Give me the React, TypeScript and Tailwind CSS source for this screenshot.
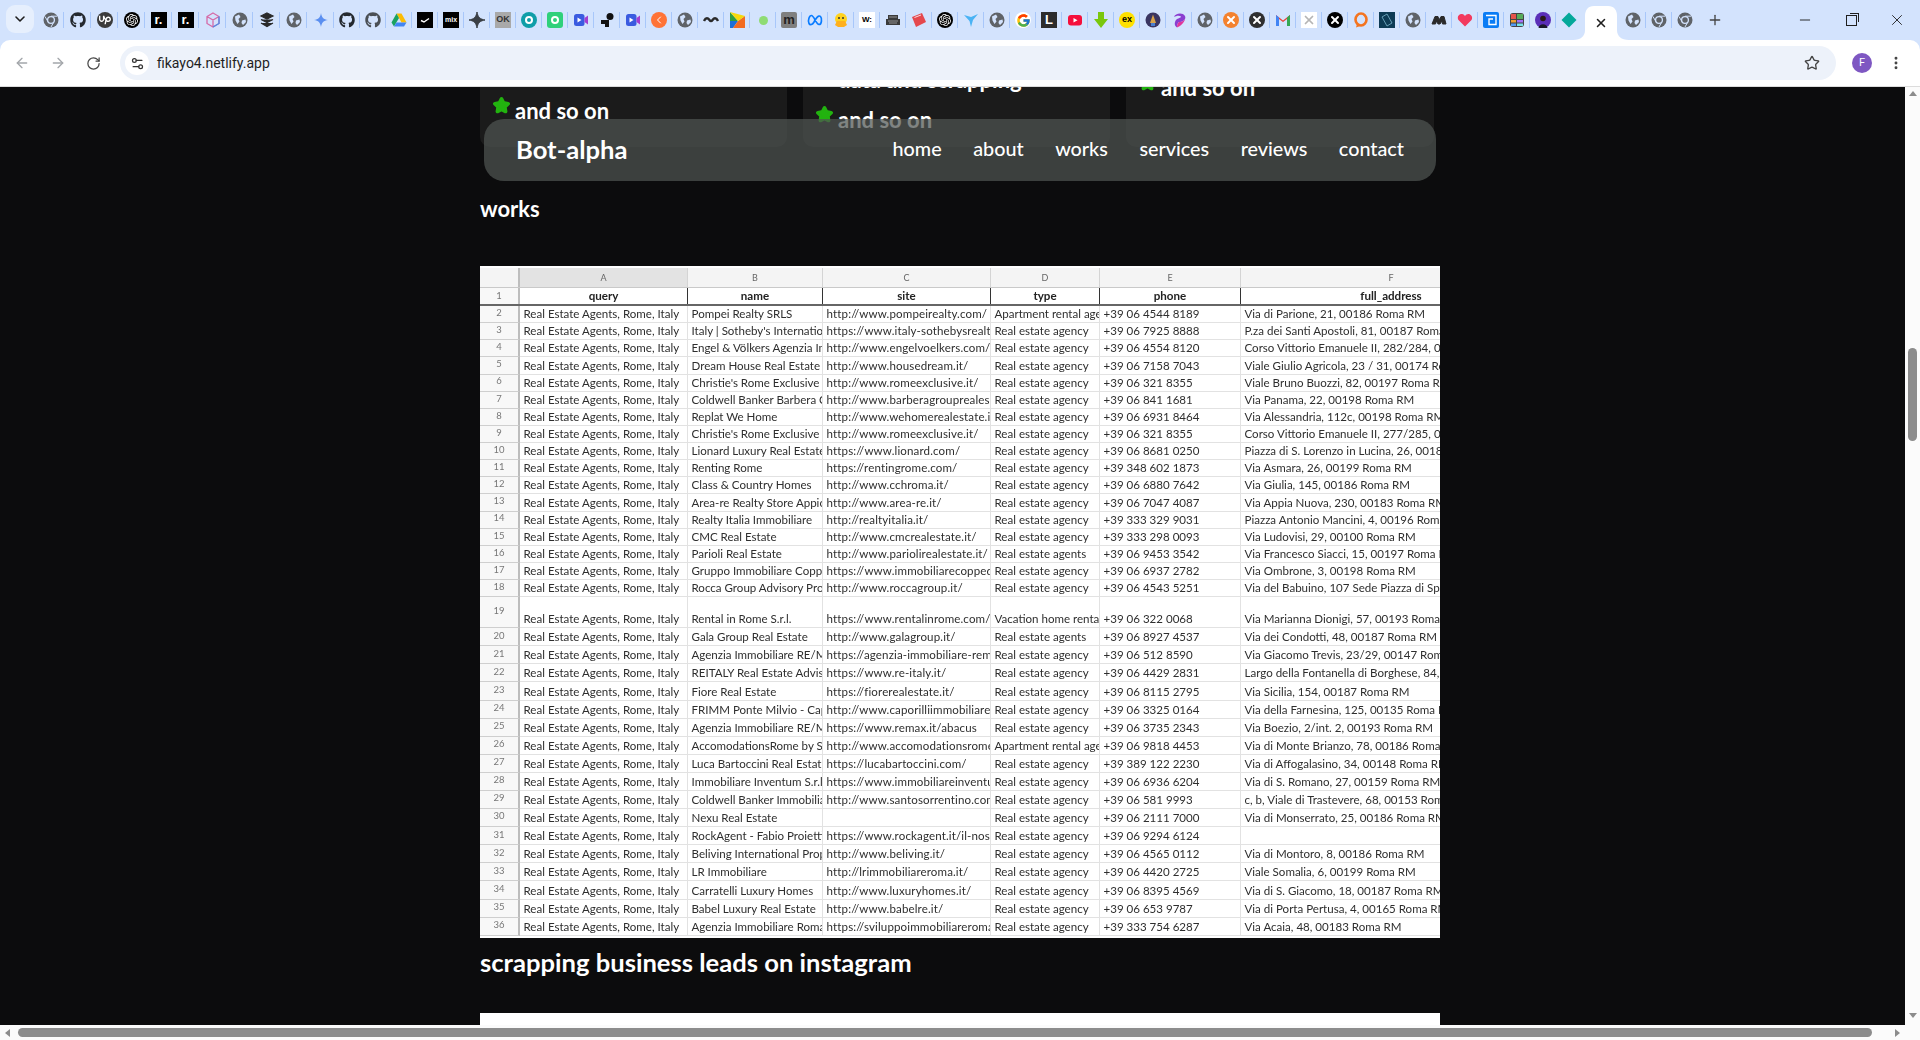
import { ReactNode } from "react";
import { ArrowLeft, ArrowRight, ChevronDown, EllipsisVertical, Minus, Plus, RotateCw, Settings2, Star, X } from "lucide-react";
import { FaGithub } from "react-icons/fa";
import { FcGoogle } from "react-icons/fc";
import { SiOpenai, SiUpwork } from "react-icons/si";

const Box = ({ className, children }: { className: string; children?: ReactNode }) => (
  <div className={`flex h-4 w-4 items-center justify-center overflow-hidden ${className}`}>{children}</div>
);

const Svg = ({ children }: { children: ReactNode }) => (
  <svg viewBox="0 0 16 16" className="h-4 w-4">
    {children}
  </svg>
);

const globe = (
  <Svg>
    <circle cx="8" cy="8" r="7.5" fill="#5f6368" />
    <path d="M3 4.5 7 2.5 8.5 5 6.5 7 7.5 9.5 5.5 12 3.5 8.5Z M10 8.5 13.5 7.5 14 10 11 13 9.5 11Z" fill="#d3e3fd" />
  </Svg>
);
const chrome = (
  <Svg>
    <circle cx="8" cy="8" r="7.5" fill="#5f6368" />
    <circle cx="8" cy="8" r="3.4" fill="#5f6368" stroke="#d3e3fd" strokeWidth="1.3" />
    <path d="M8 4.2H14M5 9.8 2 4.5M10.8 10 8 15" stroke="#d3e3fd" strokeWidth="1" />
  </Svg>
);
const video = (
  <Svg>
    <rect x="1" y="2" width="10.5" height="12" rx="2.5" fill="#3a5be0" />
    <path d="M11.5 6 15 3.5V12.5L11.5 10Z" fill="#a33fd0" />
    <path d="M4.5 5.5 8.5 8 4.5 10.5Z" fill="#fff" />
  </Svg>
);
const rSquare = (
  <Box className="bg-black font-['Liberation_Sans',sans-serif] text-[13px] font-bold text-white">r.</Box>
);
const github = <FaGithub className="h-4 w-4 text-[#24292f]" />;
const openaiDisc = (
  <Box className="rounded-full bg-black text-white">
    <SiOpenai className="h-3 w-3" />
  </Box>
);

const favicons: ReactNode[] = [
  chrome,
  github,
  <Box className="rounded-full bg-[#3b3b3b] text-white"><SiUpwork className="h-3 w-3" /></Box>,
  openaiDisc,
  rSquare,
  rSquare,
  <Svg><path d="M8 1 14 4.5V11.5L8 15 2 11.5V4.5Z M2 4.5 8 8 14 4.5 M8 8V15" fill="none" stroke="#d56aa8" strokeWidth="1.3" /><path d="M14 4.5V11.5L8 15" fill="none" stroke="#4b8fe8" strokeWidth="1.3" /></Svg>,
  globe,
  <Svg><path d="M8 1 14 4 8 7 2 4Z M2 7.5 8 10.5 14 7.5 M2 11 8 14.5 14 11" fill="#2a2a2a" stroke="#2a2a2a" strokeWidth="1.2" /></Svg>,
  globe,
  <Svg><path d="M8 1C8.6 5.4 10.6 7.4 15 8 10.6 8.6 8.6 10.6 8 15 7.4 10.6 5.4 8.6 1 8 5.4 7.4 7.4 5.4 8 1Z" fill="#5b8ff0" /></Svg>,
  github,
  <FaGithub className="h-4 w-4 text-[#4a4f55]" />,
  <Svg><path d="M5.5 1.5H10.5L15.5 10.5H10.5Z" fill="#fbbc04" /><path d="M5.5 1.5 8 6 3 14.5.5 10.5Z" fill="#1aa260" /><path d="M5.5 10.5H15.5L13 14.5H3Z" fill="#4285f4" /></Svg>,
  <Box className="bg-black"><svg viewBox="0 0 16 16" className="h-4 w-4"><path d="M4 8.5 7 10 12 6.5" fill="none" stroke="#fff" strokeWidth="1.4" /></svg></Box>,
  <Box className="bg-black font-['Liberation_Sans',sans-serif] text-[7px] font-bold text-white">mix</Box>,
  <Svg><path d="M8 0C8.8 5 11 7.2 16 8 11 8.8 8.8 11 8 16 7.2 11 5 8.8 0 8 5 7.2 7.2 5 8 0Z" fill="#3a3f45" stroke="#3a3f45" /></Svg>,
  <Box className="bg-[#a9a9a9] font-['Liberation_Sans',sans-serif] text-[9px] font-bold text-[#333]">OK</Box>,
  <Box className="rounded-full bg-[#0f9ea8]"><span className="h-2 w-2 rounded-full border-2 border-white" /></Box>,
  <Box className="rounded-[3px] bg-[#2fd07a]"><span className="h-2 w-2 rounded-sm border-2 border-white" /></Box>,
  video,
  <Svg><circle cx="11" cy="4.5" r="3.5" fill="#111" /><path d="M2 8H10V15H6V12H2Z" fill="#111" /></Svg>,
  video,
  <Box className="rounded-full bg-[#ff7336]"><ChevronDown className="h-3 w-3 rotate-90 text-white" /></Box>,
  globe,
  <Svg><path d="M1 9C3 5 5 6 6.5 8 7.5 9.5 8.5 9.5 9.5 8 11 6 13 5 15 9" fill="none" stroke="#2a2a2a" strokeWidth="2.4" /></Svg>,
  <Svg><path d="M1 0 9 9H1Z" fill="#2e9e3f" /><path d="M1 9H9L4 16H1Z" fill="#1d6fd8" /><path d="M9 9 16 4V16H4Z" fill="#f26b21" /><path d="M1 0 16 4 9 9Z" fill="#f5d90a" /></Svg>,
  <Box className="bg-transparent"><span className="h-[9px] w-[9px] rounded-full bg-[#8fdc74]" /></Box>,
  <Box className="rounded-[2px] bg-[#7f7f7f] font-['Liberation_Sans',sans-serif] text-[13px] font-bold text-[#222]">m</Box>,
  <Svg><path d="M2 11.5C.5 8 2.5 3.5 4.5 3.5 7 3.5 9 12.5 12 12.5 15 12.5 15 6 13.5 4.5 11.5 2.5 8.5 7 7 10 5.5 12.8 3 13.5 2 11.5Z" fill="none" stroke="#0a7cff" strokeWidth="1.7" /></Svg>,
  <Svg><circle cx="8" cy="7" r="6" fill="#ffd21e" /><path d="M2 13 4 9H12L14 13 11 15H5Z" fill="#ffb01e" /><circle cx="6" cy="6" r="1" fill="#333" /><circle cx="10" cy="6" r="1" fill="#333" /></Svg>,
  <Box className="bg-white font-['Liberation_Sans',sans-serif] text-[8px] font-bold text-black">W:</Box>,
  <Svg><path d="M3 3H13V7H15V13H1V7H3Z" fill="#3a3a3a" /><path d="M4 5H12M3 9H13M4 11H12" stroke="#aaa" strokeWidth=".8" /></Svg>,
  <Svg><path d="M1 5 11 1 15 10 5 15Z" fill="#e5484d" /><path d="M3.5 5.5 10 3" stroke="#fff" strokeWidth=".8" /></Svg>,
  openaiDisc,
  <Svg><path d="M1 3 8 5 15 2 10 8 8 15 6.5 9Z" fill="#4ab3f4" /></Svg>,
  globe,
  <Box className="rounded-full bg-white"><FcGoogle className="h-[15px] w-[15px]" /></Box>,
  <Box className="bg-[#2c2c2c] font-['Liberation_Sans',sans-serif] text-[13px] font-bold text-white">L</Box>,
  <Svg><rect x="1" y="3" width="14" height="10.5" rx="3" fill="#f50f3c" /><path d="M6.5 6 10.5 8.2 6.5 10.5Z" fill="#fff" /></Svg>,
  <Svg><path d="M5 0H11V7H15L8 16 1 7H5Z" fill="#7ac70c" /></Svg>,
  <Box className="rounded-full bg-[#ffe000] font-['Liberation_Sans',sans-serif] text-[9px] font-bold text-black">ex</Box>,
  <Svg><circle cx="8" cy="8" r="7.5" fill="#3a3560" /><path d="M8 2.5 11 11H5Z" fill="#d8a34a" /><path d="M6 11H10V14H6Z" fill="#4a7fd0" /></Svg>,
  <Svg><path d="M3 5C4 1 12 0 14 4 15.5 8 11 10 8 10 6.5 11 6 13 6 15.5 3.5 14 3 11 5 8 7 6 10 6 10 4.5 8 3 5 4 3 5Z" fill="#8a3ed0" /><path d="M8 10C11 10 15.5 8 14 4 15 8 12 13 6 15.5 6 13 6.5 11 8 10Z" fill="#e0359a" /></Svg>,
  globe,
  <Box className="rounded-full bg-[#f4822f]"><X className="h-3 w-3 text-white" strokeWidth={4} /></Box>,
  <Box className="rounded-full bg-[#2f2f2f]"><X className="h-3 w-3 text-white" strokeWidth={4} /></Box>,
  <Svg><path d="M1 14V3L8 8.5 15 3V14H12V7L8 10 4 7V14Z" fill="#ea4335" /><path d="M1 14V3L4 5.5V14Z" fill="#4285f4" /><path d="M15 14V3L12 5.5V14Z" fill="#34a853" /></Svg>,
  <Box className="bg-white"><X className="h-3.5 w-3.5 text-[#b5b5b5]" strokeWidth={3} /></Box>,
  <Box className="rounded-full bg-black"><X className="h-3 w-3 text-white" strokeWidth={4} /></Box>,
  <Svg><ellipse cx="8" cy="7.5" rx="5.5" ry="6" fill="none" stroke="#f4741f" strokeWidth="2.6" /><path d="M4 12 3 15.5 7 14Z" fill="#f4741f" /></Svg>,
  <Box className="bg-[#0d3b55]"><svg viewBox="0 0 16 16" className="h-4 w-4"><path d="M3 5 8 2 13 11 8 14Z" fill="none" stroke="#6fa8c0" strokeWidth=".9" /></svg></Box>,
  globe,
  <Svg><path d="M1 12 4 4.5 7 4.5 8 8 10 4.5 13 4.5 15 12H11.5L11 9 9 12H7L5.5 9 4.5 12Z" fill="#2a2a2a" stroke="#2a2a2a" strokeLinejoin="round" /></Svg>,
  <Svg><path d="M8 14.5 1.5 8C-.5 5 2 1.5 5 2 6.5 2.2 7.5 3.2 8 4 9 2.5 11 1.5 13 2.5 15.5 4 15.5 6.5 14.5 8Z" fill="#f23a5e" /></Svg>,
  <Box className="rounded-[2px] bg-[#0a7cf5]"><svg viewBox="0 0 16 16" className="h-4 w-4"><path d="M3 3.5H13V12.5H6V7H10" fill="none" stroke="#fff" strokeWidth="1.4" /></svg></Box>,
  <Svg><rect x="1" y="1" width="14" height="14" rx="3" fill="#444" /><path d="M2 2H7V7H2Z" fill="#e5534b" /><path d="M8 2H14V7H8Z" fill="#57ab5a" /><path d="M2 8H7V10.5H2Z" fill="#f0a030" /><path d="M8 8H14V10.5H8Z" fill="#a371f7" /><path d="M2 11.5H7V14H2Z" fill="#539bf5" /><path d="M8 11.5H14V14H8Z" fill="#76e3ea" /></Svg>,
  <Svg><circle cx="8" cy="8" r="8" fill="#5b2fb8" /><circle cx="8" cy="6.5" r="2.8" fill="#2a1a18" /><path d="M3.5 16C4 11 12 11 12.5 16Z" fill="#1a1a2a" /></Svg>,
  <Svg><path d="M8 .5 15.5 8 8 15.5 .5 8Z" fill="#04a89a" /></Svg>,
];

const afterTabs: ReactNode[] = [globe, chrome, chrome];

const Tab = ({ icon, wide, last }: { icon: ReactNode; wide?: boolean; last?: boolean }) => (
  <div className={`flex h-[26px] shrink-0 items-center justify-center ${wide ? "w-[27px]" : "w-[26px]"} ${last ? "" : "relative after:absolute after:right-0 after:top-[5px] after:h-4 after:w-px after:bg-[#a8c7fa]"}`}>
    {icon}
  </div>
);

const TabStrip = () => (
  <div className="relative flex h-10 shrink-0 items-center bg-[#d3e3fd]">
    <div className="ml-1.5 mr-[3px] mt-[5px] flex h-7 w-7 items-center justify-center self-start rounded-[9px] bg-[#e6effd] text-[#1f1f1f]">
      <ChevronDown className="h-4 w-4" strokeWidth={2.4} />
    </div>
    {favicons.map((icon, i) => (
      <Tab key={i} icon={icon} wide={i < 11} last={i === favicons.length - 1} />
    ))}
    <div className="relative flex h-[34px] w-[38px] shrink-0 items-center justify-center self-end">
      <svg viewBox="0 0 56 34" className="absolute bottom-0 left-[-9px] h-[34px] w-[56px]">
        <path d="M0 34C8 34 12 30 12 24V10C12 4 15 0 21 0H35C41 0 44 4 44 10V24C44 30 48 34 56 34Z" fill="#fff" />
      </svg>
      <X className="relative -mt-[1px] h-3.5 w-3.5 text-[#1f1f1f]" strokeWidth={2.6} />
    </div>
    {afterTabs.map((icon, i) => (
      <Tab key={i} icon={icon} last={i === afterTabs.length - 1} />
    ))}
    <Plus className="ml-[9px] h-4 w-4 text-[#444]" strokeWidth={2} />
    <div className="ml-auto flex h-full items-center text-[#1f1f1f]">
      <div className="flex w-[46px] justify-center"><Minus className="h-4 w-4" strokeWidth={1.4} /></div>
      <div className="flex w-[46px] justify-center">
        <div className="relative h-[11px] w-[11px] border border-[#1f1f1f] bg-[#d3e3fd] after:absolute after:-right-[3px] after:-top-[3px] after:-z-0 after:h-[9px] after:w-[9px] after:border-r after:border-t after:border-[#1f1f1f]" />
      </div>
      <div className="flex w-[46px] justify-center"><X className="h-[18px] w-[18px]" strokeWidth={1.2} /></div>
    </div>
  </div>
);

const Toolbar = () => (
  <div className="bg-[#d3e3fd]">
    <div className="flex h-[47px] items-center rounded-t-[10px] border-b border-[#dcdcdc] bg-white font-['Roboto',sans-serif]">
      <div className="flex w-[120px] items-center pl-[14px] text-[#a3a6aa]">
        <ArrowLeft className="h-4 w-4" strokeWidth={2} />
        <ArrowRight className="ml-5 h-4 w-4" strokeWidth={2} />
        <RotateCw className="ml-5 h-[15px] w-[15px] text-[#474747]" strokeWidth={2} />
      </div>
      <div className="flex h-[34px] w-[1716px] items-center rounded-full bg-[#edf2fa] pl-[5px] pr-[16px]">
        <div className="flex h-6 w-6 items-center justify-center rounded-full bg-white">
          <Settings2 className="h-[15px] w-[15px] text-[#333]" strokeWidth={2} />
        </div>
        <span className="ml-2 text-[14px] text-[#1f1f1f]">fikayo4.netlify.app</span>
        <Star className="ml-auto h-4 w-4 text-[#444]" strokeWidth={2} />
      </div>
      <div className="ml-4 flex h-5 w-5 items-center justify-center rounded-full bg-[#7e57c2] text-[11px] text-white">F</div>
      <EllipsisVertical className="ml-[16px] h-4 w-4 text-[#444]" strokeWidth={2.4} />
    </div>
  </div>
);

type Row = [string, string, string, string, string];

const A = "Real estate agency";
const rows: Row[] = [
  ["Pompei Realty SRLS", "http://www.pompeirealty.com/", "Apartment rental agency", "+39 06 4544 8189", "Via di Parione, 21, 00186 Roma RM"],
  ["Italy | Sotheby's International Realty", "https://www.italy-sothebysrealty.com/", A, "+39 06 7925 8888", "P.za dei Santi Apostoli, 81, 00187 Roma RM"],
  ["Engel & Völkers Agenzia Immobiliare", "http://www.engelvoelkers.com/", A, "+39 06 4554 8120", "Corso Vittorio Emanuele II, 282/284, 00186 Roma RM"],
  ["Dream House Real Estate Agency", "http://www.housedream.it/", A, "+39 06 7158 7043", "Viale Giulio Agricola, 23 / 31, 00174 Roma RM"],
  ["Christie's Rome Exclusive Homes", "http://www.romeexclusive.it/", A, "+39 06 321 8355", "Viale Bruno Buozzi, 82, 00197 Roma RM"],
  ["Coldwell Banker Barbera Group", "http://www.barberagrouprealestate.it/", A, "+39 06 841 1681", "Via Panama, 22, 00198 Roma RM"],
  ["Replat We Home", "http://www.wehomerealestate.it/", A, "+39 06 6931 8464", "Via Alessandria, 112c, 00198 Roma RM"],
  ["Christie's Rome Exclusive Group", "http://www.romeexclusive.it/", A, "+39 06 321 8355", "Corso Vittorio Emanuele II, 277/285, 00186 Roma RM"],
  ["Lionard Luxury Real Estate", "https://www.lionard.com/", A, "+39 06 8681 0250", "Piazza di S. Lorenzo in Lucina, 26, 00186 Roma RM"],
  ["Renting Rome", "https://rentingrome.com/", A, "+39 348 602 1873", "Via Asmara, 26, 00199 Roma RM"],
  ["Class & Country Homes", "http://www.cchroma.it/", A, "+39 06 6880 7642", "Via Giulia, 145, 00186 Roma RM"],
  ["Area-re Realty Store Appio", "http://www.area-re.it/", A, "+39 06 7047 4087", "Via Appia Nuova, 230, 00183 Roma RM"],
  ["Realty Italia Immobiliare", "http://realtyitalia.it/", A, "+39 333 329 9031", "Piazza Antonio Mancini, 4, 00196 Roma RM"],
  ["CMC Real Estate", "http://www.cmcrealestate.it/", A, "+39 333 298 0093", "Via Ludovisi, 29, 00100 Roma RM"],
  ["Parioli Real Estate", "http://www.pariolirealestate.it/", "Real estate agents", "+39 06 9453 3542", "Via Francesco Siacci, 15, 00197 Roma RM"],
  ["Gruppo Immobiliare Coppede", "https://www.immobiliarecoppede.it/", A, "+39 06 6937 2782", "Via Ombrone, 3, 00198 Roma RM"],
  ["Rocca Group Advisory Properties", "http://www.roccagroup.it/", A, "+39 06 4543 5251", "Via del Babuino, 107 Sede Piazza di Spagna"],
  ["Rental in Rome S.r.l.", "https://www.rentalinrome.com/", "Vacation home rental agency", "+39 06 322 0068", "Via Marianna Dionigi, 57, 00193 Roma RM"],
  ["Gala Group Real Estate", "http://www.galagroup.it/", "Real estate agents", "+39 06 8927 4537", "Via dei Condotti, 48, 00187 Roma RM"],
  ["Agenzia Immobiliare RE/MAX", "https://agenzia-immobiliare-remax.it/", A, "+39 06 512 8590", "Via Giacomo Trevis, 23/29, 00147 Roma RM"],
  ["REITALY Real Estate Advisors", "https://www.re-italy.it/", A, "+39 06 4429 2831", "Largo della Fontanella di Borghese, 84, 00186 Roma RM"],
  ["Fiore Real Estate", "https://fiorerealestate.it/", A, "+39 06 8115 2795", "Via Sicilia, 154, 00187 Roma RM"],
  ["FRIMM Ponte Milvio - Caporilli", "http://www.caporilliimmobiliare.it/", A, "+39 06 3325 0164", "Via della Farnesina, 125, 00135 Roma RM"],
  ["Agenzia Immobiliare RE/MAX Abacus", "https://www.remax.it/abacus", A, "+39 06 3735 2343", "Via Boezio, 2/int. 2, 00193 Roma RM"],
  ["AccomodationsRome by Sweet Home", "http://www.accomodationsrome.com/", "Apartment rental agency", "+39 06 9818 4453", "Via di Monte Brianzo, 78, 00186 Roma RM"],
  ["Luca Bartoccini Real Estate", "https://lucabartoccini.com/", A, "+39 389 122 2230", "Via di Affogalasino, 34, 00148 Roma RM"],
  ["Immobiliare Inventum S.r.l.", "https://www.immobiliareinventum.it/", A, "+39 06 6936 6204", "Via di S. Romano, 27, 00159 Roma RM"],
  ["Coldwell Banker Immobiliare", "http://www.santosorrentino.com/", A, "+39 06 581 9993", "c, b, Viale di Trastevere, 68, 00153 Roma RM"],
  ["Nexu Real Estate", "", A, "+39 06 2111 7000", "Via di Monserrato, 25, 00186 Roma RM"],
  ["RockAgent - Fabio Proietti", "https://www.rockagent.it/il-nostro", A, "+39 06 9294 6124", ""],
  ["Beliving International Properties", "http://www.beliving.it/", A, "+39 06 4565 0112", "Via di Montoro, 8, 00186 Roma RM"],
  ["LR Immobiliare", "http://lrimmobiliareroma.it/", A, "+39 06 4420 2725", "Viale Somalia, 6, 00199 Roma RM"],
  ["Carratelli Luxury Homes", "http://www.luxuryhomes.it/", A, "+39 06 8395 4569", "Via di S. Giacomo, 18, 00187 Roma RM"],
  ["Babel Luxury Real Estate", "http://www.babelre.it/", A, "+39 06 653 9787", "Via di Porta Pertusa, 4, 00165 Roma RM"],
  ["Agenzia Immobiliare Roma", "https://sviluppoimmobiliareroma.it/", A, "+39 333 754 6287", "Via Acaia, 48, 00183 Roma RM"],
];

const colWidths = ["w-[168px]", "w-[135px]", "w-[168px]", "w-[109px]", "w-[141px]", "w-[301px]"];
const letters = ["A", "B", "C", "D", "E", "F"];
const heads = ["query", "name", "site", "type", "phone", "full_address"];

const rowHeight = (n: number) => (n <= 18 ? "h-[17.125px]" : n === 19 ? "h-[31px]" : "h-[18.1px]");

const Sheet = () => (
  <div className="h-[672px] w-[960px] overflow-hidden bg-white pt-[2px] font-['Lato',sans-serif] text-[#2e2e2e] blur-[0.3px]">
    <div className="w-[1062px]">
      <div className="flex h-5 border-b border-[#c9c9c9] bg-[#f4f4f4] text-[9px] text-[#666]">
        <div className="w-10 shrink-0 border-r-2 border-[#bdbdbd]" />
        {letters.map((l, i) => (
          <div key={l} className={`flex shrink-0 items-center justify-center border-r border-[#d4d4d4] ${colWidths[i]} ${i === 0 ? "bg-[#e3e3e3]" : ""}`}>
            {l}
          </div>
        ))}
      </div>
      <div className="flex h-[18px] border-b-2 border-[#666] bg-white text-[11.6px] font-bold text-[#222]">
        <div className="flex w-10 shrink-0 items-center justify-center border-r-2 border-[#bdbdbd] bg-[#f8f8f8] text-[9.5px] font-normal text-[#777]">1</div>
        {heads.map((h, i) => (
          <div key={h} className={`flex shrink-0 items-center justify-center border-r border-[#333] ${colWidths[i]}`}>
            {h}
          </div>
        ))}
      </div>
      {rows.map((r, i) => {
        const n = i + 2;
        return (
          <div key={n} className={`flex ${rowHeight(n)}`}>
            <div className="flex w-10 shrink-0 items-center justify-center border-b border-r-2 border-b-[#cfcfcf] border-r-[#bdbdbd] bg-[#f8f8f8] pb-0.5 text-[9.5px] text-[#777]">
              {n}
            </div>
            {["Real Estate Agents, Rome, Italy", ...r].map((cell, c) => (
              <div
                key={c}
                className={`flex shrink-0 items-end overflow-hidden whitespace-nowrap border-b border-r border-[#e2e2e2] pl-[3.5px] text-[11.55px] leading-[16px] ${colWidths[c]} ${c === 2 ? "tracking-[0.13px]" : ""}`}
              >
                {cell}
              </div>
            ))}
          </div>
        );
      })}
    </div>
  </div>
);

const Bullet = ({ text }: { text: string }) => (
  <li className="flex items-start gap-[5px] text-[22px] font-bold leading-[40px] text-white">
    <Star className="mt-[6px] h-[17px] w-[17px] shrink-0 fill-[#22b30f] text-[#22b30f]" strokeWidth={4} strokeLinejoin="round" />
    <span>{text}</span>
  </li>
);

const Card = ({ pad, children }: { pad: string; children: ReactNode }) => (
  <div className={`flex flex-col justify-end rounded-[10px] bg-[#1b1b1b] pl-[13px] ${pad}`}>
    <ul>{children}</ul>
  </div>
);

const links = ["home", "about", "works", "services", "reviews", "contact"];

const Navbar = () => (
  <nav className="absolute left-[484px] top-8 flex h-[62px] w-[952px] items-center justify-between rounded-[20px] bg-[#4f5452]/[0.72] pl-8 pr-8 text-white">
    <span className="-mt-[1px] text-[25.6px] font-bold">Bot-alpha</span>
    <ul className="-mt-[3px] flex gap-[31.5px] text-[19.8px] font-medium">
      {links.map((l) => (
        <li key={l}>{l}</li>
      ))}
    </ul>
  </nav>
);

const Page = () => (
  <div className="relative flex-1 overflow-hidden bg-[#0c0c0d] font-['Lato',sans-serif]">
    <div className="relative ml-[480px] w-[960px]">
      <div className="-mt-[200px] grid h-[260px] grid-cols-[307px_307px_308px] gap-x-4">
        <Card pad="pb-[16px]"><Bullet text="and so on" /></Card>
        <Card pad="pb-[7px]"><Bullet text="data and scrapping" /><Bullet text="and so on" /></Card>
        <Card pad="pb-[39px]"><Bullet text="and so on" /></Card>
      </div>
      <h3 className="mt-[48px] h-[71px] text-[22px] font-bold leading-[28px] text-white">works</h3>
      <Sheet />
      <h2 className="mt-[9px] h-[66px] text-[25.6px] font-bold leading-[30px] text-white">scrapping business leads on instagram</h2>
      <div className="h-[12px] bg-white" />
    </div>
    <Navbar />
  </div>
);

const VScrollbar = () => (
  <div className="relative flex w-[15px] shrink-0 flex-col items-center bg-[#fbfbfb] pt-[4px]">
    <div className="h-0 w-0 border-x-[4.5px] border-b-[5px] border-x-transparent border-b-[#8c8c8c]" />
    <div className="mt-[252px] h-[93px] w-[9px] rounded-full bg-[#8c8c8c]" />
    <div className="mt-auto mb-[7px] h-0 w-0 border-x-[4.5px] border-t-[5px] border-x-transparent border-t-[#8c8c8c]" />
  </div>
);

const HScrollbar = () => (
  <div className="flex h-[15px] shrink-0 items-center bg-[#fbfbfb] pl-[5px]">
    <div className="h-0 w-0 border-y-[4.5px] border-r-[5px] border-y-transparent border-r-[#8c8c8c]" />
    <div className="ml-[8px] h-[9px] w-[1854px] rounded-full bg-[#8c8c8c]" />
    <div className="ml-[23px] h-0 w-0 border-y-[4.5px] border-l-[5px] border-y-transparent border-l-[#8c8c8c]" />
  </div>
);

export default function App() {
  return (
    <div className="flex h-[1040px] w-[1920px] flex-col overflow-hidden bg-white">
      <TabStrip />
      <Toolbar />
      <div className="flex min-h-0 flex-1">
        <Page />
        <VScrollbar />
      </div>
      <HScrollbar />
    </div>
  );
}
